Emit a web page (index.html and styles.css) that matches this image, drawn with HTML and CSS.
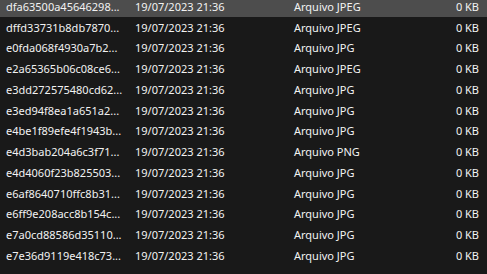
FILE: index.html
```html
<!DOCTYPE html>
<html lang="pt-BR">
<head>
<meta charset="utf-8">
<title>Arquivos</title>
<link rel="stylesheet" href="styles.css">
</head>
<body>
<div class="list">
  <div class="row selected"><span class="name">dfa63500a45646298...</span><span class="date">19/07/2023 21:36</span><span class="type">Arquivo JPEG</span><span class="size">0 KB</span></div>
  <div class="row"><span class="name">dffd33731b8db7870...</span><span class="date">19/07/2023 21:36</span><span class="type">Arquivo JPEG</span><span class="size">0 KB</span></div>
  <div class="row"><span class="name">e0fda068f4930a7b2...</span><span class="date">19/07/2023 21:36</span><span class="type">Arquivo JPG</span><span class="size">0 KB</span></div>
  <div class="row"><span class="name">e2a65365b06c08ce6...</span><span class="date">19/07/2023 21:36</span><span class="type">Arquivo JPEG</span><span class="size">0 KB</span></div>
  <div class="row"><span class="name">e3dd272575480cd62...</span><span class="date">19/07/2023 21:36</span><span class="type">Arquivo JPG</span><span class="size">0 KB</span></div>
  <div class="row"><span class="name">e3ed94f8ea1a651a2...</span><span class="date">19/07/2023 21:36</span><span class="type">Arquivo JPG</span><span class="size">0 KB</span></div>
  <div class="row"><span class="name">e4be1f89efe4f1943b...</span><span class="date">19/07/2023 21:36</span><span class="type">Arquivo JPG</span><span class="size">0 KB</span></div>
  <div class="row"><span class="name">e4d3bab204a6c3f71...</span><span class="date">19/07/2023 21:36</span><span class="type">Arquivo PNG</span><span class="size">0 KB</span></div>
  <div class="row"><span class="name">e4d4060f23b825503...</span><span class="date">19/07/2023 21:36</span><span class="type">Arquivo JPG</span><span class="size">0 KB</span></div>
  <div class="row"><span class="name">e6af8640710ffc8b31...</span><span class="date">19/07/2023 21:36</span><span class="type">Arquivo JPG</span><span class="size">0 KB</span></div>
  <div class="row"><span class="name">e6ff9e208acc8b154c...</span><span class="date">19/07/2023 21:36</span><span class="type">Arquivo JPG</span><span class="size">0 KB</span></div>
  <div class="row"><span class="name">e7a0cd88586d35110...</span><span class="date">19/07/2023 21:36</span><span class="type">Arquivo JPG</span><span class="size">0 KB</span></div>
  <div class="row"><span class="name">e7e36d9119e418c73...</span><span class="date">19/07/2023 21:36</span><span class="type">Arquivo JPG</span><span class="size">0 KB</span></div>
</div>
</body>
</html>
```
FILE: styles.css
```css
html, body {
  margin: 0;
  padding: 0;
  background: #191919;
  height: 100%;
  overflow: hidden;
}
body {
  font-family: "Segoe UI", "Noto Sans", "Open Sans", sans-serif;
  font-size: 11px;
  color: #f2f2f2;
}
.list {
  display: flex;
  flex-direction: column;
  margin-top: -4px;
}
.row {
  display: grid;
  grid-template-columns: 129px 159px 1fr 60px;
  align-items: center;
  height: 20.75px;
  padding: 0 8px 0 6px;
  white-space: nowrap;
}
.row.selected {
  background: #4d4d4d;
}
.size {
  text-align: right;
}
```
